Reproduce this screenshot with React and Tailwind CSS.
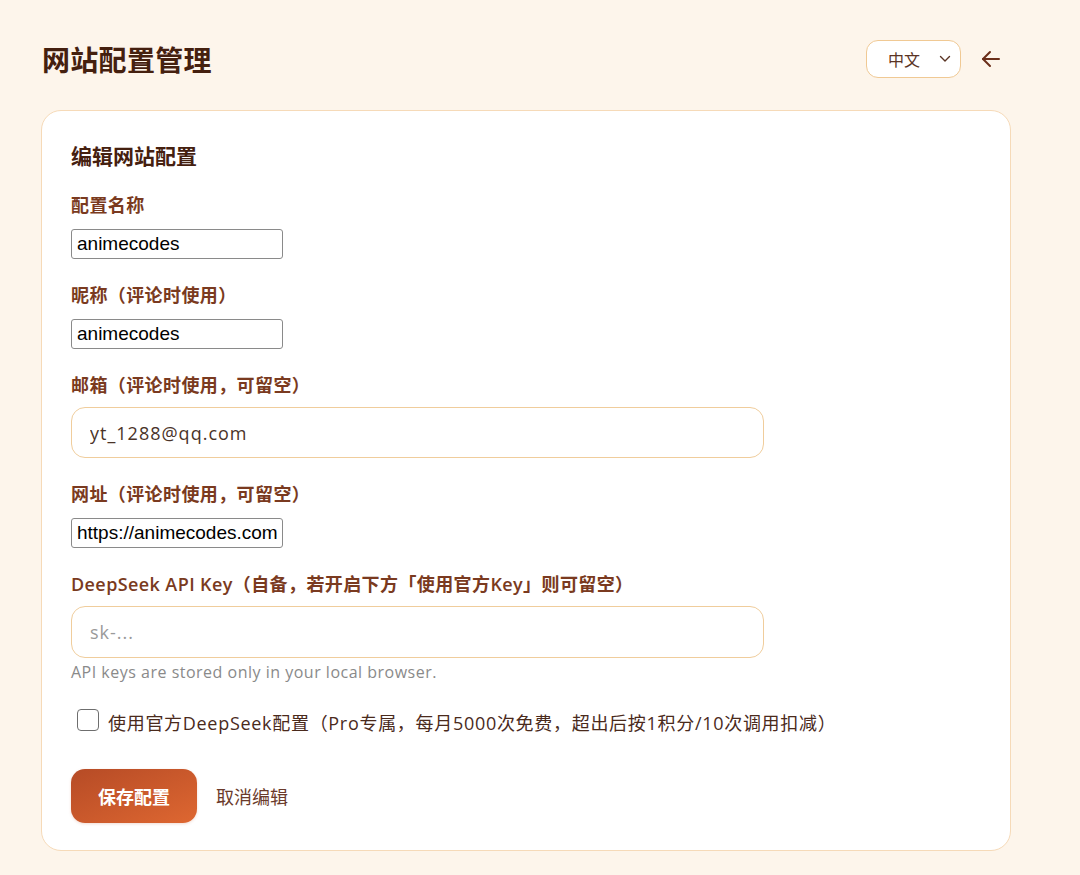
import { useState } from 'react'

const cjk = { fontFamily: '"Noto Sans CJK SC", "Noto Sans", sans-serif' }
const latin = { fontFamily: '"Open Sans", "Noto Sans CJK SC", sans-serif' }
const plain = { fontFamily: '"Liberation Sans", Arial, sans-serif' }

function Label({ children, className = 'mb-3' }) {
  return (
    <label className={`block text-[18px] leading-6 font-semibold tracking-[0.4px] text-[#7a3a20] ${className}`} style={latin}>
      {children}
    </label>
  )
}

export default function App() {
  const [name, setName] = useState('animecodes')
  const [nick, setNick] = useState('animecodes')
  const [email, setEmail] = useState('yt_1288@qq.com')
  const [site, setSite] = useState('https://animecodes.com')
  const [apiKey, setApiKey] = useState('')
  const [official, setOfficial] = useState(false)

  return (
    <div className="min-h-screen bg-[#fdf5eb] pt-10 pb-6" style={cjk}>
      <div className="ml-[41px] w-[970px]">
        <div className="flex items-center justify-between h-[38px] mb-8">
          <h1 className="text-[28px] font-bold text-[#45200f] pl-px tracking-[0.3px]">网站配置管理</h1>
          <div className="flex items-center gap-[10px]">
            <div className="relative">
              <select className="appearance-none h-[38px] w-[95px] rounded-xl border border-[#f0c994] bg-white pl-[21px] text-[16px] text-[#5a3424] outline-none">
                <option>中文</option>
                <option>English</option>
              </select>
              <svg className="pointer-events-none absolute right-[10px] top-[15px]" width="12" height="8" viewBox="0 0 12 8" fill="none">
                <path d="M1.5 1.5 6 6l4.5-4.5" stroke="#5a3424" strokeWidth="1.4" strokeLinecap="round" strokeLinejoin="round" />
              </svg>
            </div>
            <button className="w-10 h-10 flex items-center justify-center text-[#6b2f1a]">
              <svg width="24" height="24" viewBox="0 0 24 24" fill="none" stroke="currentColor" strokeWidth="2" strokeLinecap="round" strokeLinejoin="round">
                <path d="M20 12H4" />
                <path d="M11 19l-7-7 7-7" />
              </svg>
            </button>
          </div>
        </div>

        <div className="bg-white border border-[#f6dab8] rounded-[20px] px-[29px] pt-[29px] pb-[27px]">
          <h2 className="text-[21px] leading-[30px] font-bold text-[#45200f] mb-[23px]">编辑网站配置</h2>

          <div className="flex flex-col gap-6">
            <div>
              <Label>配置名称</Label>
              <input
                value={name}
                onChange={e => setName(e.target.value)}
                className="block w-[212px] h-[30px] border border-[#8a8a8a] rounded-[3px] px-[5px] text-[19px] text-black"
                style={plain}
              />
            </div>
            <div>
              <Label>昵称（评论时使用）</Label>
              <input
                value={nick}
                onChange={e => setNick(e.target.value)}
                className="block w-[212px] h-[30px] border border-[#8a8a8a] rounded-[3px] px-[5px] text-[19px] text-black"
                style={plain}
              />
            </div>
            <div>
              <Label className="mb-[10px]">邮箱（评论时使用，可留空）</Label>
              <input
                value={email}
                onChange={e => setEmail(e.target.value)}
                className="block w-[693px] h-[51px] border border-[#f0cd9c] rounded-[14px] px-[18px] text-[18px] tracking-[1px] text-[#4a3328] outline-none"
                style={latin}
              />
            </div>
            <div>
              <Label>网址（评论时使用，可留空）</Label>
              <input
                value={site}
                onChange={e => setSite(e.target.value)}
                className="block w-[212px] h-[30px] border border-[#8a8a8a] rounded-[3px] px-[5px] text-[19px] text-black"
                style={plain}
              />
            </div>
            <div>
              <Label className="mb-[10px]">DeepSeek API Key（自备，若开启下方「使用官方Key」则可留空）</Label>
              <input
                value={apiKey}
                onChange={e => setApiKey(e.target.value)}
                placeholder="sk-..."
                className="block w-[693px] h-[52px] border border-[#f0cd9c] rounded-[14px] px-[18px] text-[18px] tracking-[1px] text-[#4a3328] placeholder:text-[#9a9a9a] outline-none"
                style={latin}
              />
              <p className="mt-[2px] text-[16px] leading-6 tracking-[0.5px] text-[#8a8a8a]" style={latin}>
                API keys are stored only in your local browser.
              </p>
            </div>
          </div>

          <label className="flex items-start mt-[25px] cursor-pointer">
            <input
              type="checkbox"
              checked={official}
              onChange={e => setOfficial(e.target.checked)}
              className="appearance-none ml-[6px] w-[22px] h-[22px] rounded-[4px] border-[1.5px] border-[#6e6e6e] bg-white checked:bg-[#c8582a]"
            />
            <span className="ml-[9px] text-[18px] leading-[30px] -mt-[1px] tracking-[0.7px] text-[#4a2a1c]" style={latin}>
              使用官方DeepSeek配置（Pro专属，每月5000次免费，超出后按1积分/10次调用扣减）
            </span>
          </label>

          <div className="flex items-center gap-[19px] mt-[31px]">
            <button className="w-[126px] h-[54px] rounded-[14px] bg-gradient-to-br from-[#b64b26] to-[#de6731] text-white text-[18px] font-bold shadow-[0_1px_3px_rgba(190,80,40,0.2)]">
              保存配置
            </button>
            <button className="text-[18px] text-[#6b3a2a]">取消编辑</button>
          </div>
        </div>
      </div>
    </div>
  )
}
